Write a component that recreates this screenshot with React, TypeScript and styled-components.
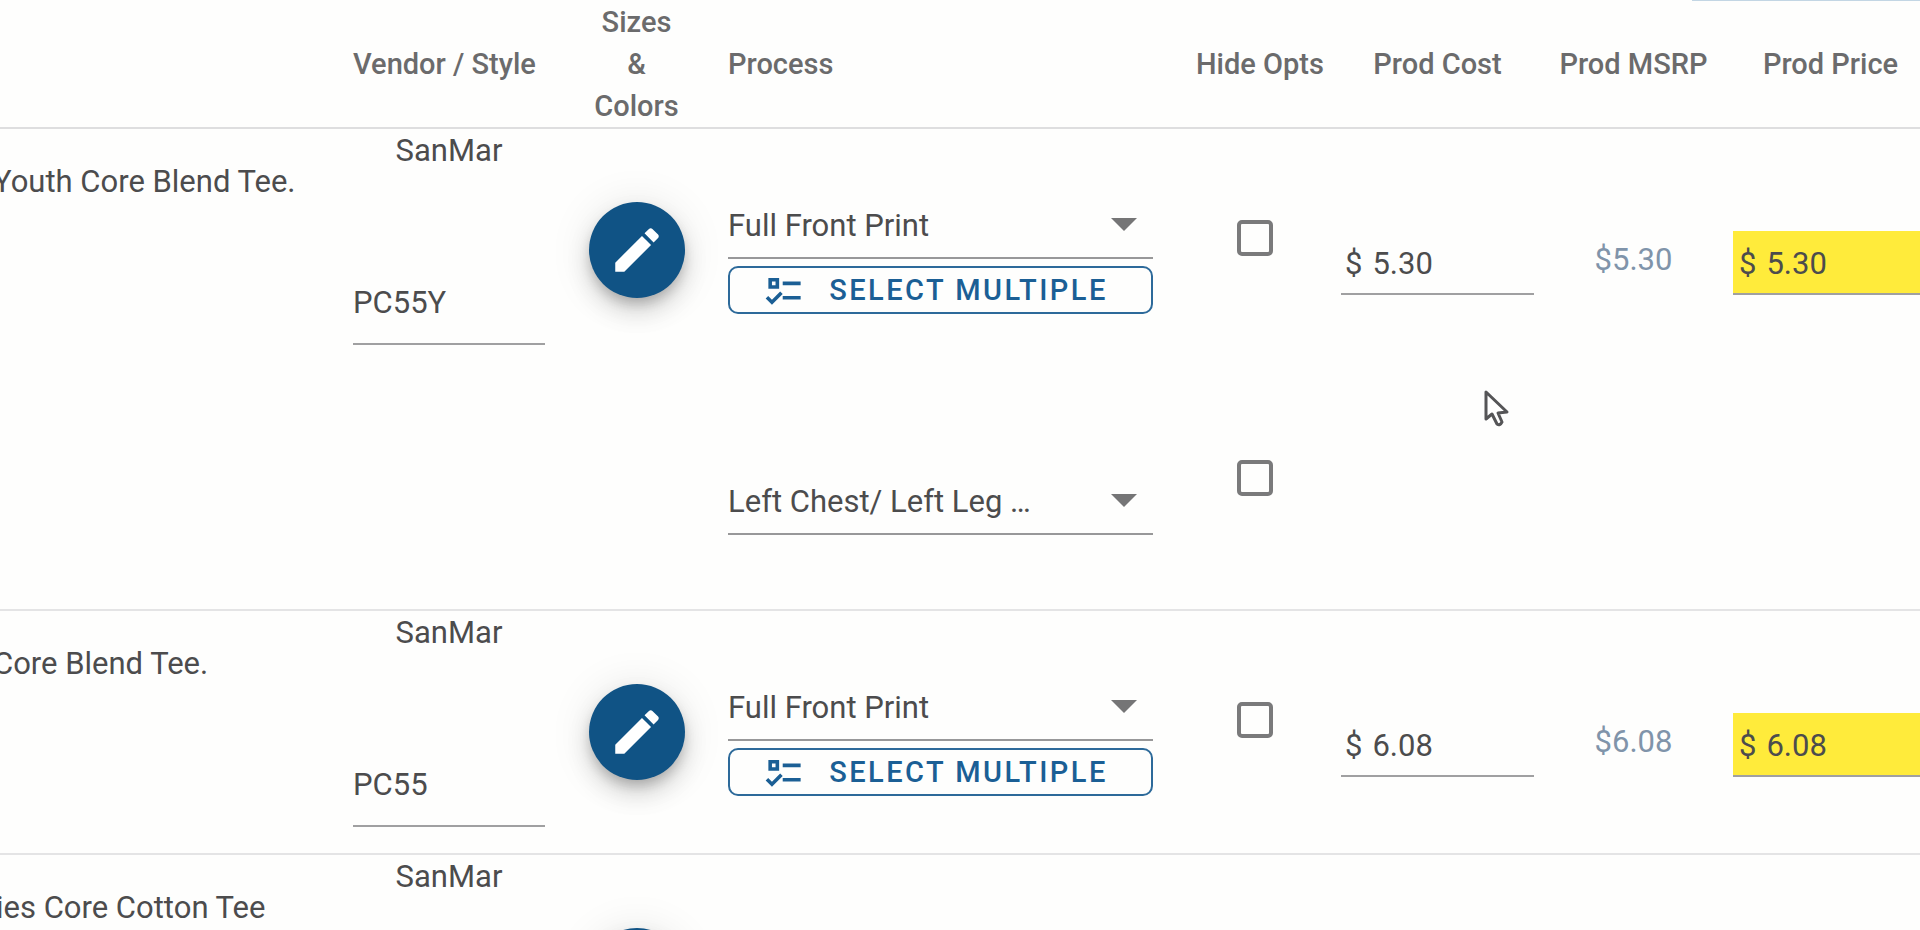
import React from "react";
import styled, { createGlobalStyle } from "styled-components";

const GlobalStyle = createGlobalStyle`
  *, *::before, *::after { box-sizing: border-box; }
  body {
    margin: 0;
    background: #fefefd;
    color: #4c4c4d;
    font-family: Roboto, "Liberation Sans", sans-serif;
    font-size: 31px;
    line-height: 40px;
  }
  input, select, button { font: inherit; color: inherit; margin: 0; padding: 0; }
`;

const Page = styled.main`
  position: relative;
  height: 100vh;
  overflow: hidden;
`;

const PanelEdge = styled.div`
  position: absolute;
  top: 0;
  right: 0;
  width: 228px;
  height: 1px;
  background: #c3d6e4;
`;

const Pointer = styled.svg`
  position: absolute;
  top: 388px;
  right: 409px;
  width: 28px;
  height: 40px;
`;

const Table = styled.table`
  width: 100%;
  table-layout: fixed;
  border-collapse: separate;
  border-spacing: 0;
`;

const Col = styled.col<{ $width?: number }>`
  width: ${(p) => (p.$width ? `${p.$width}px` : "auto")};
`;

const HeadCell = styled.th<{ $align?: string; $pad?: string }>`
  padding: ${(p) => p.$pad ?? "1px 0 0"};
  text-align: ${(p) => p.$align ?? "center"};
  vertical-align: middle;
  white-space: nowrap;
  font-size: 29px;
  font-weight: 500;
  line-height: 42px;
  color: #6b6b6c;
  border-bottom: 2px solid #dededf;
`;

const Stacked = styled.span`
  display: block;
`;

const Row = styled.tr<{ $height: number }>`
  height: ${(p) => p.$height}px;
`;

const Cell = styled.td<{ $pad?: string; $align?: string }>`
  padding: ${(p) => p.$pad ?? "0"};
  text-align: ${(p) => p.$align ?? "left"};
  vertical-align: top;
  border-bottom: 2px solid #e4e4e5;
`;

const Description = styled.div<{ $scrolled: number }>`
  white-space: nowrap;
  text-indent: -${(p) => p.$scrolled}px;
`;

const Vendor = styled.div`
  text-align: center;
`;

const StyleInput = styled.input`
  display: block;
  width: 100%;
  height: 84px;
  margin-top: 90px;
  border: 0;
  border-bottom: 2px solid #a0a0a1;
  border-radius: 0;
  background: transparent;
  outline: none;
`;

const EditButton = styled.button`
  display: inline-flex;
  align-items: center;
  justify-content: center;
  width: 96px;
  height: 96px;
  border: 0;
  border-radius: 50%;
  background: #105385;
  color: #fff;
  box-shadow: 0 7px 12px -2px rgba(0, 0, 0, 0.2), 0 14px 24px 0 rgba(0, 0, 0, 0.14),
    0 2px 43px 0 rgba(0, 0, 0, 0.1);
  svg { width: 58px; height: 58px; }
`;

const ProcessStack = styled.div`
  display: flex;
  flex-direction: column;
  gap: 7px;
`;

const SelectBox = styled.div<{ $gap?: number }>`
  display: grid;
  align-items: center;
  height: 64px;
  margin-top: ${(p) => p.$gap ?? 0}px;
  border-bottom: 2px solid #989899;
  svg, select { grid-area: 1 / 1; }
  svg {
    justify-self: end;
    width: 26px;
    height: 13px;
    margin: 0 16px 4px 0;
    pointer-events: none;
  }
`;

const Select = styled.select`
  width: 100%;
  height: 62px;
  appearance: none;
  border: 0;
  background: transparent;
  outline: none;
`;

const MultipleButton = styled.button`
  display: flex;
  align-items: center;
  justify-content: center;
  gap: 23px;
  height: 48px;
  padding-right: 10px;
  border: 2px solid #2d6a9a;
  border-radius: 10px;
  background: transparent;
  color: #1b5f95;
  font-size: 29px;
  font-weight: 500;
  letter-spacing: 0.085em;
  white-space: nowrap;
  svg { width: 43px; height: 43px; flex: none; }
`;

const CheckBox = styled.input<{ $gap?: number }>`
  display: block;
  appearance: none;
  width: 36px;
  height: 36px;
  margin: ${(p) => p.$gap ?? 0}px auto 0;
  border: 4px solid #7a7a7b;
  border-radius: 5px;
`;

const MoneyField = styled.label<{ $highlight?: boolean }>`
  display: flex;
  align-items: center;
  gap: 10px;
  height: 64px;
  padding: 4px 0 0 ${(p) => (p.$highlight ? 6 : 4)}px;
  border-bottom: 2px solid #a0a0a1;
  background: ${(p) => (p.$highlight ? "#ffeb3b" : "transparent")};
`;

const MoneyInput = styled.input`
  flex: 1;
  min-width: 0;
  width: 100%;
  border: 0;
  background: transparent;
  outline: none;
`;

const Msrp = styled.span`
  color: #8094aa;
`;

const PencilIcon = () => (
  <svg viewBox="0 0 24 24" fill="currentColor" aria-hidden="true">
    <path d="M20.71,7.04C21.1,6.65 21.1,6 20.71,5.63L18.37,3.29C18,2.9 17.35,2.9 16.96,3.29L15.12,5.12L18.87,8.87M3,17.25V21H6.75L17.81,9.93L14.06,6.18L3,17.25Z" />
  </svg>
);

const ChecklistIcon = () => (
  <svg viewBox="0 0 24 24" fill="currentColor" fillRule="evenodd" aria-hidden="true">
    <path d="M3,5H9V11H3V5M5,7V9H7V7H5M11,7H21V9H11V7M11,15H21V17H11V15M5,20L1.5,16.5L2.91,15.09L5,17.17L9.59,12.59L11,14L5,20Z" />
  </svg>
);

const ProcessSelect = ({ value, gap }: { value: string; gap?: number }) => (
  <SelectBox $gap={gap}>
    <Select aria-label="Process" defaultValue={value}>
      <option value={value}>{value}</option>
    </Select>
    <svg viewBox="0 0 26 13" aria-hidden="true">
      <path d="M0 0H26L13 13Z" fill="#757576" />
    </svg>
  </SelectBox>
);

type Product = {
  name: string;
  scrolled: number;
  style: string;
  price: string;
  processes: string[];
  height: number;
};

const products: Product[] = [
  { name: "Youth Core Blend Tee.", scrolled: 7, style: "PC55Y", price: "5.30", processes: ["Full Front Print", "Left Chest/ Left Leg …"], height: 482 },
  { name: "Core Blend Tee.", scrolled: 7, style: "PC55", price: "6.08", processes: ["Full Front Print"], height: 244 },
  { name: "ies Core Cotton Tee", scrolled: 4, style: "", price: "", processes: [], height: 244 },
];

const ProductRow = ({ product }: { product: Product }) => {
  const [first, ...others] = product.processes;
  return (
    <Row $height={product.height}>
      <Cell $pad="33px 0 0">
        <Description $scrolled={product.scrolled}>{product.name}</Description>
      </Cell>
      <Cell $pad="2px 18px 0">
        <Vendor>SanMar</Vendor>
        {product.style && <StyleInput aria-label="Style" defaultValue={product.style} />}
      </Cell>
      <Cell $pad="73px 0 0" $align="center">
        <EditButton type="button" aria-label="Edit sizes and colors">
          <PencilIcon />
        </EditButton>
      </Cell>
      <Cell $pad="66px 18px 0">
        {first && (
          <ProcessStack>
            <ProcessSelect value={first} />
            <MultipleButton type="button">
              <ChecklistIcon />
              SELECT MULTIPLE
            </MultipleButton>
            {others.map((p) => (
              <ProcessSelect key={p} value={p} gap={150} />
            ))}
          </ProcessStack>
        )}
      </Cell>
      <Cell $pad="91px 2px 0 0">
        {product.processes.map((p, i) => (
          <CheckBox key={p} type="checkbox" aria-label={`Hide options ${p}`} $gap={i ? 204 : 0} />
        ))}
      </Cell>
      <Cell $pad="102px 18px 0 0">
        {product.price && (
          <MoneyField>
            $<MoneyInput aria-label="Prod Cost" defaultValue={product.price} />
          </MoneyField>
        )}
      </Cell>
      <Cell $pad="111px 0 0" $align="center">
        {product.price && <Msrp>${product.price}</Msrp>}
      </Cell>
      <Cell $pad="102px 0 0 18px">
        {product.price && (
          <MoneyField $highlight>
            $<MoneyInput aria-label="Prod Price" defaultValue={product.price} />
          </MoneyField>
        )}
      </Cell>
    </Row>
  );
};

export default function App() {
  return (
    <Page>
      <GlobalStyle />
      <Table>
        <colgroup>
          <Col />
          <Col $width={228} />
          <Col $width={147} />
          <Col $width={461} />
          <Col $width={170} />
          <Col $width={211} />
          <Col $width={163} />
          <Col $width={205} />
        </colgroup>
        <thead>
          <tr>
            <HeadCell aria-label="Product" />
            <HeadCell $align="left" $pad="1px 0 0 18px">Vendor / Style</HeadCell>
            <HeadCell>
              <Stacked>Sizes</Stacked>
              <Stacked>&amp;</Stacked>
              <Stacked>Colors</Stacked>
            </HeadCell>
            <HeadCell $align="left" $pad="1px 0 0 18px">Process</HeadCell>
            <HeadCell $pad="1px 0 0 8px">Hide Opts</HeadCell>
            <HeadCell $pad="1px 18px 0 0">Prod Cost</HeadCell>
            <HeadCell>Prod MSRP</HeadCell>
            <HeadCell $pad="1px 0 0 26px">Prod Price</HeadCell>
          </tr>
        </thead>
        <tbody>
          {products.map((p) => (
            <ProductRow key={p.name} product={p} />
          ))}
        </tbody>
      </Table>
      <PanelEdge />
      <Pointer viewBox="0 0 28 40" aria-hidden="true">
        <path
          d="M3 4V31L9 26L14 36Q17 38 19 34L15 25L24 24Z"
          fill="#fff"
          stroke="#555557"
          strokeWidth="3"
          strokeLinejoin="round"
        />
      </Pointer>
    </Page>
  );
}
